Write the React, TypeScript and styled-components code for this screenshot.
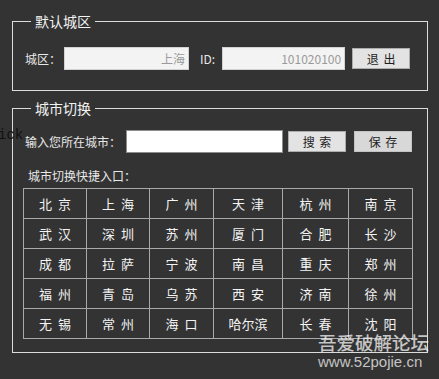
import styled, { createGlobalStyle } from 'styled-components';

const cities = [
  '北 京', '上 海', '广 州', '天 津', '杭 州', '南 京',
  '武 汉', '深 圳', '苏 州', '厦 门', '合 肥', '长 沙',
  '成 都', '拉 萨', '宁 波', '南 昌', '重 庆', '郑 州',
  '福 州', '青 岛', '乌 苏', '西 安', '济 南', '徐 州',
  '无 锡', '常 州', '海 口', '哈尔滨', '长 春', '沈 阳',
];

const GlobalStyle = createGlobalStyle`
  html, body {
    margin: 0;
    padding: 0;
    background: #333333;
  }
  body {
    font-family: "Noto Sans CJK SC", "Microsoft YaHei", sans-serif;
  }
`;

const StyledPage = styled.div`
  position: relative;
  width: 439px;
  height: 379px;
  overflow: hidden;
  background: #333333;
  padding: 13px 12px 0;
  box-sizing: border-box;
  display: flex;
  flex-direction: column;
  gap: 9px;
`;

const StyledFieldset = styled.fieldset<{ $padTop: number; $padBottom: number }>`
  margin: 0;
  min-width: 0;
  border: 1px solid #dcdcdc;
  padding: ${(p) => p.$padTop}px 12px ${(p) => p.$padBottom}px;
  box-sizing: border-box;
  width: 416px;
`;

const StyledLegend = styled.legend`
  margin-left: 6px;
  padding: 0 4px;
  font-size: 14px;
  line-height: 16px;
  color: #f2f2f2;
`;

const StyledRow = styled.div`
  display: flex;
  align-items: center;
  height: 23px;
`;

const StyledLabel = styled.span<{ $gap: number; $lead?: number }>`
  font-size: 12px;
  line-height: 16px;
  color: #e8e8e8;
  margin-left: ${(p) => p.$lead ?? 0}px;
  margin-right: ${(p) => p.$gap}px;
  white-space: nowrap;
`;

const StyledInput = styled.div<{ $width: number; $white?: boolean }>`
  width: ${(p) => p.$width}px;
  height: 23px;
  box-sizing: border-box;
  background: ${(p) => (p.$white ? '#ffffff' : '#f3f3f3')};
  border: 1px solid ${(p) => (p.$white ? '#8c8c8c' : '#d2d2d2')};
  color: #9a9a9a;
  font-size: 12px;
  line-height: 21px;
  text-align: right;
  padding-right: 3px;
`;

const StyledButton = styled.div<{ $pressed?: boolean; $left: number }>`
  width: 58px;
  height: 21px;
  margin-left: ${(p) => p.$left}px;
  box-sizing: border-box;
  background: ${(p) => (p.$pressed ? '#d8d8d8' : '#e3e3e3')};
  border: 1px solid ${(p) => (p.$pressed ? '#c4c4c4' : '#adadad')};
  color: #1e1e1e;
  font-size: 12px;
  line-height: 19px;
  text-align: center;
  word-spacing: 2px;
  white-space: pre;
`;

const StyledSubTitle = styled.div`
  margin: 15px 0 4px 3px;
  font-size: 12px;
  line-height: 16px;
  color: #e8e8e8;
`;

const StyledGrid = styled.div`
  margin-left: -2px;
  display: grid;
  grid-template-columns: 62px 62px 63px 68px 65px 63px;
  grid-auto-rows: 29px;
  gap: 1px;
  width: max-content;
  background: #a9a9a9;
  border: 1px solid #a9a9a9;
`;

const StyledCell = styled.div`
  background: #333333;
  color: #f4f4f4;
  font-size: 13px;
  display: flex;
  align-items: center;
  justify-content: center;
  white-space: pre;
  word-spacing: 3px;
`;

const StyledStray = styled.span`
  position: absolute;
  left: -2px;
  top: 127px;
  font-family: "Liberation Mono", monospace;
  font-size: 14px;
  line-height: 16px;
  color: #111111;
`;

const StyledMark = styled.div`
  position: absolute;
  left: 318px;
  top: 333px;
  color: rgba(255, 255, 255, 0.72);
  line-height: 1;
`;

const StyledMarkTitle = styled.div`
  font-size: 18.5px;
  font-weight: 500;
`;

const StyledMarkUrl = styled.div`
  margin-top: 2px;
  font-family: "Liberation Sans", Arial, sans-serif;
  font-size: 15px;
`;

const App = () => {
  return (
    <>
      <GlobalStyle />
      <StyledPage>
        <StyledFieldset $padTop={18} $padBottom={20}>
          <StyledLegend>默认城区</StyledLegend>
          <StyledRow>
            <StyledLabel $gap={3}>城区：</StyledLabel>
            <StyledInput $width={125}>上海</StyledInput>
            <StyledLabel $gap={7} $lead={11}>
              ID:
            </StyledLabel>
            <StyledInput $width={123}>101020100</StyledInput>
            <StyledButton $left={7}>退 出</StyledButton>
          </StyledRow>
        </StyledFieldset>
        <StyledFieldset $padTop={14} $padBottom={13}>
          <StyledLegend>城市切换</StyledLegend>
          <StyledRow>
            <StyledLabel $gap={5}>输入您所在城市：</StyledLabel>
            <StyledInput $width={157} $white />
            <StyledButton $left={5}>搜 索</StyledButton>
            <StyledButton $left={8} $pressed>
              保 存
            </StyledButton>
          </StyledRow>
          <StyledSubTitle>城市切换快捷入口：</StyledSubTitle>
          <StyledGrid>
            {cities.map((city, index) => (
              <StyledCell key={index}>{city}</StyledCell>
            ))}
          </StyledGrid>
        </StyledFieldset>
        <StyledStray>ick</StyledStray>
        <StyledMark>
          <StyledMarkTitle>吾爱破解论坛</StyledMarkTitle>
          <StyledMarkUrl>www.52pojie.cn</StyledMarkUrl>
        </StyledMark>
      </StyledPage>
    </>
  );
};

export default App;
